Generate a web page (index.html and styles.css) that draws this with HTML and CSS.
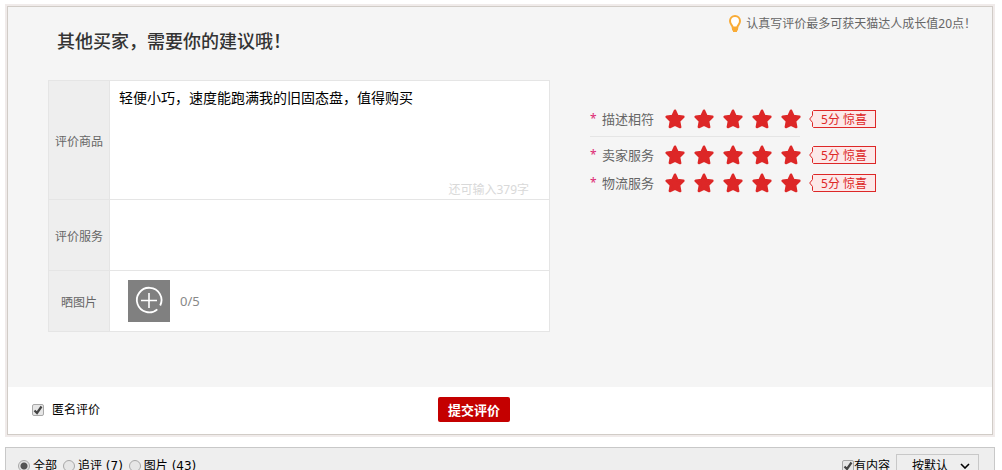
FILE: index.html
```html
<!DOCTYPE html>
<html lang="zh-CN">
<head>
    <meta charset="UTF-8">
    <meta name="viewport" content="width=device-width, initial-scale=1.0">
    <title>评价</title>
    <link rel="stylesheet" href="styles.css">
</head>
<body>
    <svg class="sprite" aria-hidden="true">
        <symbol id="star" viewBox="0 0 20 20">
            <path d="M10 1.8 L12.4 7 L18.3 7.8 L14 12 L15.1 18 L10 15.5 L4.9 18 L6 12 L1.7 7.8 L7.6 7 Z" fill="#dd2727" stroke="#dd2727" stroke-width="2.6" stroke-linejoin="round"/>
        </symbol>
        <symbol id="tag-arrow" viewBox="0 0 5 18">
            <path d="M5 0 H4 V5 L1 9 L4 13 V18 H5 Z" fill="#fce9e9"/>
            <path d="M5 0.5 H4.5 L3.5 1.5 V5.5 L0.7 9 L3.5 12.5 V16.5 L4.5 17.5 H5" fill="none" stroke="#dd2727"/>
        </symbol>
    </svg>

    <form class="review-card">
        <div class="review-main">
            <div class="review-head">
                <h1 class="review-title">其他买家，需要你的建议哦！</h1>
                <p class="review-tip">
                    <svg class="bulb" viewBox="0 0 14 18" aria-hidden="true">
                        <path d="M4.7 12.5 C4.7 10.5 2 9.5 2 6 A5 5 0 0 1 12 6 C12 9.5 9.3 10.5 9.3 12.5 Z" fill="#fff" stroke="#f9ab35" stroke-width="2"/>
                        <path d="M4 13 H10 V15 L9 16 H5 L4 15 Z" fill="#f9ab35"/>
                        <path d="M5 16.5 H9" stroke="#f9ab35"/>
                    </svg>
                    认真写评价最多可获天猫达人成长值20点！
                </p>
            </div>

            <div class="review-body">
                <div class="review-fields">
                    <div class="field field-product">
                        <label class="field-label" for="product">评价商品</label>
                        <div class="field-content">
                            <textarea id="product">轻便小巧，速度能跑满我的旧固态盘，值得购买</textarea>
                            <span class="count">还可输入379字</span>
                        </div>
                    </div>
                    <div class="field field-service">
                        <label class="field-label" for="service">评价服务</label>
                        <div class="field-content">
                            <textarea id="service"></textarea>
                        </div>
                    </div>
                    <div class="field field-photo">
                        <span class="field-label">晒图片</span>
                        <div class="field-content">
                            <button type="button" class="upload" aria-label="晒图片">
                                <svg viewBox="0 0 42 42" aria-hidden="true">
                                    <path d="M29.3 29.3 A12.3 12.3 0 1 1 32.2 25.5" fill="none" stroke="#fff" stroke-width="1.8"/>
                                    <path d="M21 13 V28 M13 20.5 H29" stroke="#fff" stroke-width="1.6"/>
                                </svg>
                            </button>
                            <span class="upload-count">0/5</span>
                        </div>
                    </div>
                </div>

                <div class="ratings">
                    <div class="rating rating-main">
                        <span class="required">*</span>
                        <span class="rating-name">描述相符</span>
                        <span class="stars" role="img" aria-label="5分">
                            <svg><use href="#star"/></svg>
                            <svg><use href="#star"/></svg>
                            <svg><use href="#star"/></svg>
                            <svg><use href="#star"/></svg>
                            <svg><use href="#star"/></svg>
                        </span>
                        <span class="tag"><svg><use href="#tag-arrow"/></svg><span>5分 惊喜</span></span>
                    </div>
                    <div class="rating">
                        <span class="required">*</span>
                        <span class="rating-name">卖家服务</span>
                        <span class="stars" role="img" aria-label="5分">
                            <svg><use href="#star"/></svg>
                            <svg><use href="#star"/></svg>
                            <svg><use href="#star"/></svg>
                            <svg><use href="#star"/></svg>
                            <svg><use href="#star"/></svg>
                        </span>
                        <span class="tag"><svg><use href="#tag-arrow"/></svg><span>5分 惊喜</span></span>
                    </div>
                    <div class="rating">
                        <span class="required">*</span>
                        <span class="rating-name">物流服务</span>
                        <span class="stars" role="img" aria-label="5分">
                            <svg><use href="#star"/></svg>
                            <svg><use href="#star"/></svg>
                            <svg><use href="#star"/></svg>
                            <svg><use href="#star"/></svg>
                            <svg><use href="#star"/></svg>
                        </span>
                        <span class="tag"><svg><use href="#tag-arrow"/></svg><span>5分 惊喜</span></span>
                    </div>
                </div>
            </div>
        </div>

        <div class="review-submit">
            <label class="anonymous"><input type="checkbox" checked> 匿名评价</label>
            <button type="submit" class="submit">提交评价</button>
        </div>
    </form>

    <form class="filter">
        <div class="filter-types">
            <label><input type="radio" name="type" checked>全部</label>
            <label><input type="radio" name="type">追评 (7)</label>
            <label><input type="radio" name="type">图片 (43)</label>
        </div>
        <div class="filter-sort">
            <label><input type="checkbox" checked>有内容</label>
            <select aria-label="排序">
                <option>按默认</option>
            </select>
        </div>
    </form>
</body>
</html>
```

FILE: styles.css
```css
* {
    box-sizing: border-box;
}

body {
    margin: 0;
    padding: 6px 7px 0 5px;
    background: #fff;
    color: #000;
    font: 12px/18px "Noto Sans", "Noto Sans CJK SC", sans-serif;
}

button, select, textarea {
    font-family: inherit;
}

.sprite {
    display: none;
}

input[type="checkbox"], input[type="radio"] {
    width: 12px;
    height: 12px;
    margin: 0;
    border: 1px solid #a8a8a8;
    appearance: none;
    background: #e6e6e6;
}

input[type="checkbox"] {
    border-radius: 2px;
}

input[type="checkbox"]:checked {
    background: #e6e6e6 url("data:image/svg+xml,%3Csvg xmlns='http://www.w3.org/2000/svg' width='10' height='10'%3E%3Cpath d='M1.5 5.5 L4 8 L8.5 1.5' fill='none' stroke='%23444' stroke-width='2.2'/%3E%3C/svg%3E") center no-repeat;
}

input[type="radio"] {
    border-radius: 50%;
}

input[type="radio"]:checked {
    background: radial-gradient(circle, #555 0 3px, #e6e6e6 4px);
}

/* review form */
.review-card {
    border: 1px solid #d1ccc7;
    box-shadow: 0 0 0 2px #f0ebea;
    margin: 0 2px 12px;
}

.review-main {
    background: #f5f5f5;
    padding: 8px 16px 55px 40px;
}

.review-head {
    display: flex;
    justify-content: space-between;
    align-items: flex-start;
    height: 65px;
}

.review-title {
    margin: 12px 0 0 9px;
    font-size: 18px;
    line-height: 28px;
    font-weight: 500;
    color: #333;
}

.review-tip {
    display: flex;
    align-items: center;
    gap: 4px;
    margin: 0;
    color: #666;
}

.bulb {
    width: 14px;
    height: 18px;
}

.review-body {
    display: flex;
    align-items: flex-start;
    gap: 40px;
}

.review-fields {
    width: 502px;
    border: 1px solid #e5e5e5;
    background: #fff;
}

.field {
    display: flex;
}

.field + .field {
    border-top: 1px solid #e5e5e5;
}

.field-product {
    min-height: 118px;
}

.field-service {
    min-height: 71px;
}

.field-photo {
    min-height: 61px;
}

.field-label {
    display: flex;
    align-items: center;
    justify-content: center;
    width: 61px;
    padding-top: 4px;
    border-right: 1px solid #e5e5e5;
    background: #eee;
    color: #666;
}

.field-content {
    flex: 1;
    display: flex;
    flex-direction: column;
}

.field textarea {
    flex: 1;
    width: 100%;
    min-height: 0;
    padding: 7px 9px;
    border: 0;
    outline: 0;
    resize: none;
    background: transparent;
    color: #000;
    font-size: 14px;
    line-height: 20px;
}

.count {
    align-self: flex-end;
    margin-right: 20px;
    color: #d9d9d9;
}

.field-photo .field-content {
    flex-direction: row;
    align-items: center;
    gap: 10px;
    padding-left: 18px;
}

.upload {
    width: 42px;
    height: 42px;
    padding: 0;
    border: 0;
    background: #808080;
    cursor: pointer;
}

.upload svg {
    display: block;
}

.upload-count {
    color: #888;
    font-size: 13px;
}

/* star ratings */
.ratings {
    padding-top: 29px;
}

.rating {
    display: flex;
    align-items: center;
    height: 28px;
}

.rating-main {
    height: 32px;
    padding-bottom: 12px;
    background: linear-gradient(#e5e5e5, #e5e5e5) left 27px / 210px 1px no-repeat;
}

.required {
    width: 12px;
    color: #dd2772;
}

.rating-name {
    color: #666;
    font-size: 13px;
}

.stars {
    display: flex;
    gap: 9px;
    margin: 0 8px 0 11px;
}

.stars svg {
    width: 20px;
    height: 20px;
}

.tag {
    display: flex;
    height: 18px;
    color: #dd2727;
    line-height: 18px;
}

.tag svg {
    width: 5px;
    height: 18px;
}

.tag span {
    padding: 0 8px 0 7px;
    border: 1px solid #dd2727;
    border-left: 0;
    background: #fce9e9;
}

/* submit row */
.review-submit {
    display: grid;
    grid-template-columns: 1fr auto 1fr;
    align-items: center;
    padding: 10px 76px 12px 24px;
}

.anonymous {
    display: flex;
    align-items: center;
    gap: 8px;
}

.submit {
    height: 25px;
    padding: 0 10px;
    border: 0;
    border-radius: 2px;
    background: #c40000;
    color: #fff;
    font-size: 13px;
    font-weight: bold;
    cursor: pointer;
}

/* filter bar */
.filter {
    display: flex;
    justify-content: space-between;
    border: 1px solid #c8c8c8;
    background: #eee;
    padding: 6px 15px 7px 12px;
    font-family: "DejaVu Sans", "Noto Sans CJK SC", sans-serif;
}

.filter-types, .filter-sort {
    display: flex;
    align-items: center;
    gap: 6px;
}

.filter label {
    display: flex;
    align-items: center;
}

.filter-types input[type="radio"] {
    margin-right: 3px;
}

.filter select {
    width: 83px;
    height: 23px;
    padding: 0 15px;
    border: 1px solid #c8c8c8;
    border-radius: 0;
    appearance: none;
    background: #eee url("data:image/svg+xml,%3Csvg xmlns='http://www.w3.org/2000/svg' width='10' height='6'%3E%3Cpath d='M1 1 L5 5 L9 1' fill='none' stroke='%23000' stroke-width='1.6'/%3E%3C/svg%3E") right 8px center no-repeat;
    color: #000;
    font-size: 12px;
}
```
